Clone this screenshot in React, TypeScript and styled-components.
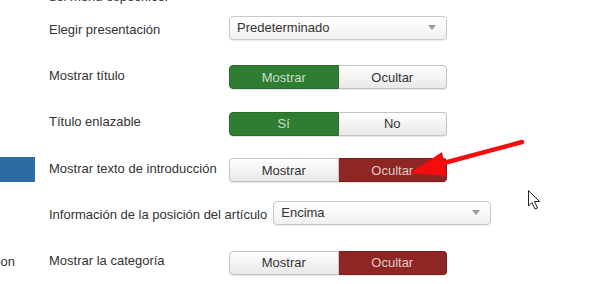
import React from "react";
import styled, { createGlobalStyle, css } from "styled-components";

const GlobalStyle = createGlobalStyle`
  html, body { margin: 0; padding: 0; background: #fff; overflow: hidden; }
  body { font-family: "Liberation Sans", Arial, Helvetica, sans-serif; color: #333; }
`;

const Page = styled.div`
  position: relative;
  display: flex;
  width: 599px;
  height: 284px;
  overflow: hidden;
  background: #fff;
`;

const Sidebar = styled.nav`
  width: 35px;
  flex-shrink: 0;
  padding-top: 157px;
  display: flex;
  flex-direction: column;
  gap: 67px;
  overflow: hidden;
`;

const NavItem = styled.div<{ $active?: boolean }>`
  height: 25px;
  line-height: 25px;
  font-size: 13px;
  white-space: nowrap;
  display: flex;
  justify-content: flex-end;
  padding-right: 20px;
  color: #333;
  ${(p) =>
    p.$active &&
    css`
      background: #2d6ca2;
      color: #fff;
    `}
`;

const Main = styled.main`
  margin-left: 14px;
  display: flex;
  flex-direction: column;
`;

const Description = styled.div`
  margin-top: -12px;
  font-size: 13px;
  line-height: 18px;
  color: #333;
`;

const Row = styled.div`
  display: flex;
  align-items: center;
  height: 46.5px;
`;

const Label = styled.label`
  min-width: 174px;
  margin-right: 6px;
  font-size: 13px;
  color: #333;
  white-space: nowrap;
`;

const Select = styled.div`
  width: 218px;
  height: 24px;
  box-sizing: border-box;
  border: 1px solid #c8c8c8;
  border-radius: 4px;
  background: linear-gradient(#ffffff, #f1f1f1);
  box-shadow: 0 1px 1px rgba(0, 0, 0, 0.08);
  display: flex;
  align-items: center;
  padding: 0 8px 0 7px;
  font-size: 13px;
  color: #333;
  margin-top: -3px;
`;

const SelectText = styled.span`
  flex: 1;
`;

const Caret = styled.span`
  width: 0;
  height: 0;
  border-left: 4px solid transparent;
  border-right: 4px solid transparent;
  border-top: 5px solid #9a9a9a;
  margin-right: 2px;
`;

const Toggle = styled.div`
  display: flex;
  width: 218px;
  height: 24px;
  margin-top: 4px;
  border-radius: 4px;
  box-shadow: 0 1px 1px rgba(0, 0, 0, 0.1);
`;

type Tone = "off" | "green" | "red";

const ToggleOption = styled.div<{ $tone: Tone }>`
  flex: 1;
  display: flex;
  align-items: center;
  justify-content: center;
  box-sizing: border-box;
  font-size: 13px;
  border: 1px solid #c4c4c4;
  color: #333;
  background: linear-gradient(#ffffff, #e8e8e8);
  &:first-child {
    border-radius: 4px 0 0 4px;
  }
  &:last-child {
    border-radius: 0 4px 4px 0;
    border-left: none;
  }
  ${(p) =>
    p.$tone === "green" &&
    css`
      background: #2f7d32;
      border-color: #286b2b;
      color: rgba(235, 245, 235, 0.82);
    `}
  ${(p) =>
    p.$tone === "red" &&
    css`
      background: #8e2623;
      border-color: #7a201d;
      color: rgba(245, 230, 230, 0.85);
    `}
`;

const Overlay = styled.svg`
  position: absolute;
  left: 0;
  top: 0;
  pointer-events: none;
`;

type ToggleRow = {
  kind: "toggle";
  label: string;
  options: [string, string];
  active: 0 | 1;
  tone: Tone;
};
type SelectRow = { kind: "select"; label: string; value: string };

const rows: (ToggleRow | SelectRow)[] = [
  { kind: "select", label: "Elegir presentación", value: "Predeterminado" },
  { kind: "toggle", label: "Mostrar título", options: ["Mostrar", "Ocultar"], active: 0, tone: "green" },
  { kind: "toggle", label: "Título enlazable", options: ["Sí", "No"], active: 0, tone: "green" },
  { kind: "toggle", label: "Mostrar texto de introducción", options: ["Mostrar", "Ocultar"], active: 1, tone: "red" },
  { kind: "select", label: "Información de la posición del artículo", value: "Encima" },
  { kind: "toggle", label: "Mostrar la categoría", options: ["Mostrar", "Ocultar"], active: 1, tone: "red" },
];

export default function App() {
  return (
    <>
      <GlobalStyle />
      <Page>
        <Sidebar>
          <NavItem $active />
          <NavItem>Integration</NavItem>
        </Sidebar>
        <Main>
          <Description>del menú específico.</Description>
          {rows.map((r) => (
            <Row key={r.label}>
              <Label>{r.label}</Label>
              {r.kind === "select" ? (
                <Select>
                  <SelectText>{r.value}</SelectText>
                  <Caret />
                </Select>
              ) : (
                <Toggle>
                  {r.options.map((o, i) => (
                    <ToggleOption key={o} $tone={i === r.active ? r.tone : "off"}>
                      {o}
                    </ToggleOption>
                  ))}
                </Toggle>
              )}
            </Row>
          ))}
        </Main>
        <Overlay width="599" height="284" viewBox="0 0 599 284">
          <line x1="522" y1="142" x2="440" y2="164" stroke="#f40d0d" strokeWidth="4.5" strokeLinecap="round" />
          <polygon points="410,173 442,152 447,176" fill="#f40d0d" />
          <path
            d="M528.5 190.5 L528.5 206 L532 202.5 L535 209 L537.5 208 L534.5 201.5 L539.5 201.5 Z"
            fill="#fff"
            stroke="#222"
            strokeWidth="1"
            strokeLinejoin="round"
          />
        </Overlay>
      </Page>
    </>
  );
}
